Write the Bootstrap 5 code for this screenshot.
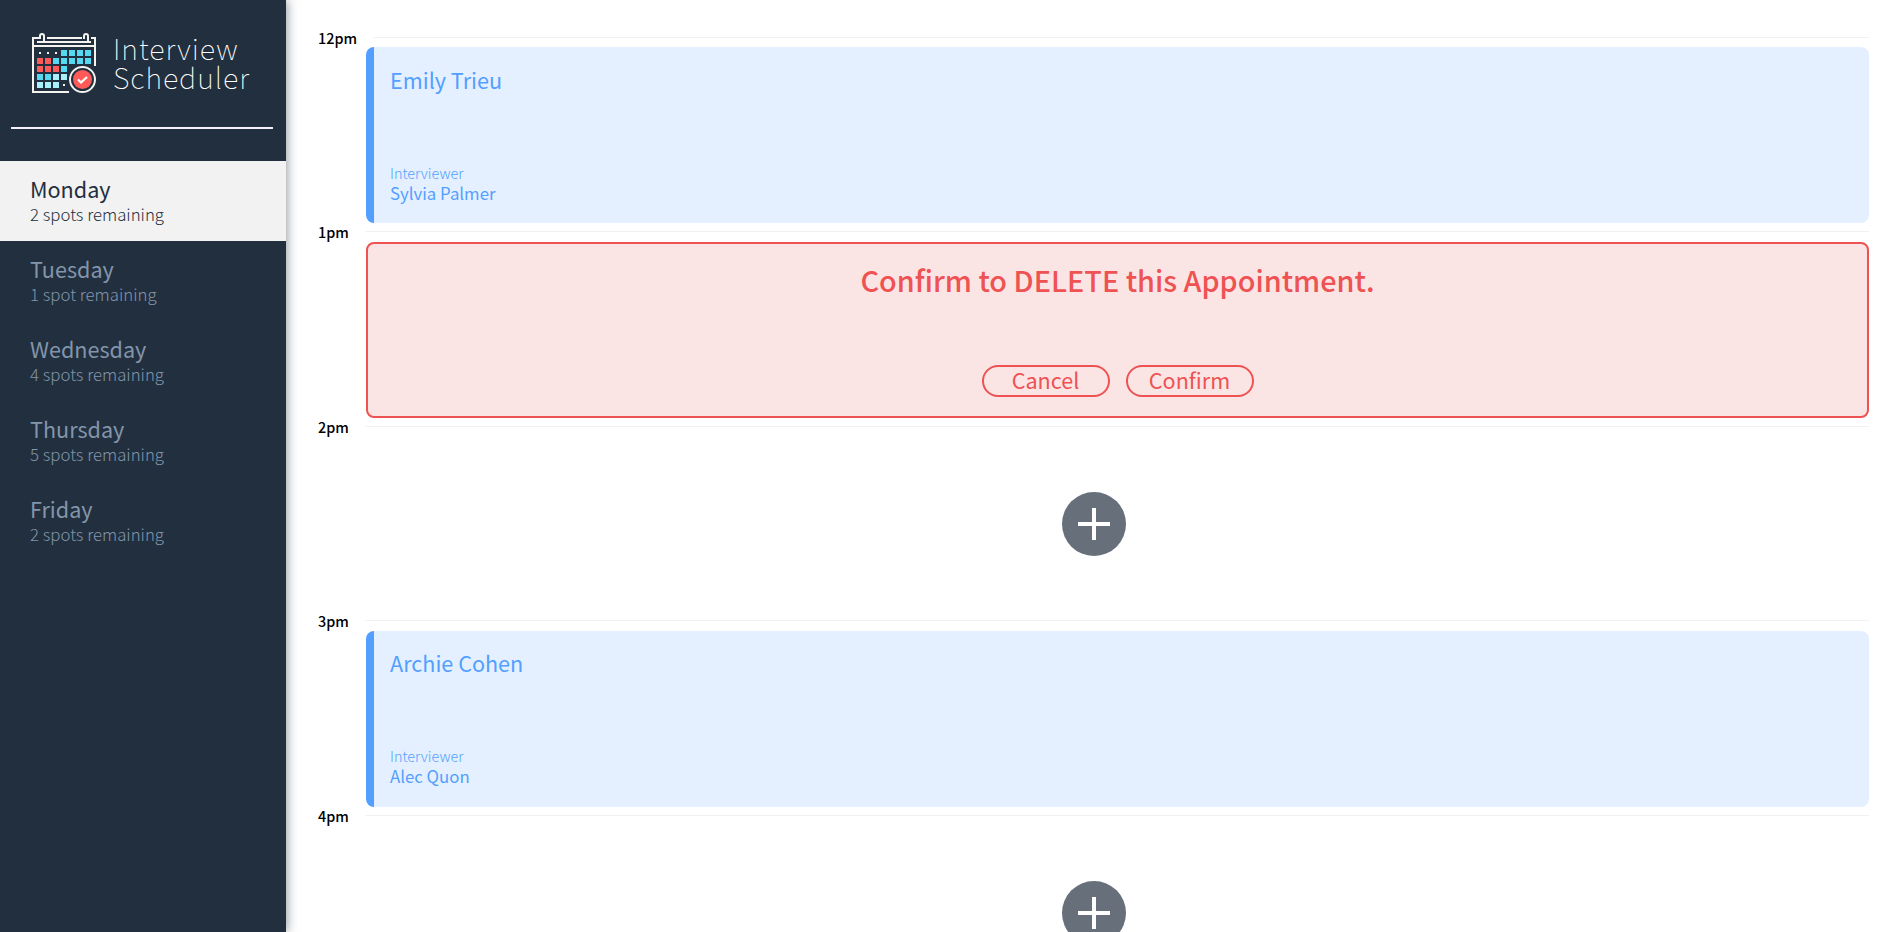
<!DOCTYPE html>
<html lang="en">
<head>
<meta charset="utf-8">
<meta name="viewport" content="width=device-width, initial-scale=1">
<title>Interview Scheduler</title>
<link href="https://cdn.jsdelivr.net/npm/bootstrap@5.3.0/dist/css/bootstrap.min.css" rel="stylesheet">
<style>
  body { font-family: "Noto Sans CJK SC", "Noto Sans", sans-serif; background: #fff; height: 932px; overflow: hidden; white-space: nowrap; }
  .sidebar { width: 286px; background: #222f3e; box-shadow: 1px 0 10px rgba(34,47,62,.5); z-index: 1; }
  .brand { height: 127px; padding: 33px 0 0 32px; }
  .brand-name { font-size: 28.8px; font-weight: 100; letter-spacing: .95px; line-height: 29px; color: #fff; margin: 0 0 0 17px; }
  .rule { height: 2px; margin: 0 13px 32px 11px; background: #f4f0f9; }
  .day { height: 80px; padding: 16px 0 0 30px; color: #8395ab; border: 0; border-radius: 0; background: transparent; }
  .day.active { background: #f2f2f2; color: #222f3e; }
  .day-name { font-size: 21.6px; line-height: 24px; font-weight: 400; }
  .day-spots { font-size: 16.8px; line-height: 24px; font-weight: 300; margin-top: 1px; }
  .schedule { padding: 28.6px 21px 0 32px; }
  .slot { height: 194.5px; }
  .hour { height: 18.5px; }
  .hour-label { font-size: 14.4px; line-height: 18px; font-weight: 500; color: #000; min-width: 31px; }
  .hour-line { height: 1px; background: #f2f2f2; margin: 8px 0 0 16px; }
  .appt { height: 176px; margin-left: 48px; border-radius: 8px; color: #539fff; background: #e4f0ff; border-left: 8px solid #539fff; padding: 20.5px 16px 20.5px; }
  .appt-name { font-size: 21.6px; line-height: 24px; }
  .appt-role { font-size: 14.4px; line-height: 20px; font-weight: 300; }
  .appt-person { font-size: 16.8px; line-height: 20px; }
  .confirm-box { height: 176px; margin-left: 48px; border-radius: 8px; border: 2px solid #ee5253; background: #fbe5e4; color: #ee5253; padding: 19px 0 19px; }
  .confirm-title { font-size: 28.8px; line-height: 34px; font-weight: 500; }
  .pill { width: 128px; height: 32px; border: 2px solid #ee5253; border-radius: 16px; color: #ee5253; font-size: 21.6px; line-height: 26px; padding: 0 0 2px; }
  .add { width: 64px; height: 64px; margin-top: 56px; }
</style>
</head>
<body>
<div class="d-flex h-100">
  <aside class="sidebar d-flex flex-column flex-shrink-0">
    <div class="brand d-flex align-items-start">
      <svg width="64" height="60" viewBox="32 33 64 60" fill="none">
        <g stroke="#f5f3ef" stroke-width="2">
          <path d="M40 38H33V92H69M47 38H82M91 38H95V66M37 42H91M33 46H95"/>
          <path d="M40 39V36a2 2 0 0 1 4 0V42M84 39V36a2 2 0 0 1 4 0V42"/>
        </g>
        <path fill="#f5f3ef" d="M39 52h2v2h-2zM47 52h2v2h-2zM55 52h2v2h-2zM63 84h2v2h-2z"/>
        <path fill="#54d9f0" d="M61 50h6v6h-6zM69 50h6v6h-6zM77 50h6v6h-6zM85 50h6v6h-6zM53 58h6v6h-6zM61 58h6v6h-6zM69 58h6v6h-6zM77 58h6v6h-6zM85 58h6v6h-6zM61 66h6v6h-6zM37 74h6v6h-6zM45 74h6v6h-6z"/>
        <path fill="#ff5a5a" d="M37 58h6v6h-6zM45 58h6v6h-6zM37 66h6v6h-6zM45 66h6v6h-6zM53 66h6v6h-6z"/>
        <path fill="#a8f0fa" d="M53 74h6v6h-6zM61 74h6v6h-6zM37 82h6v6h-6zM45 82h6v6h-6zM53 82h6v6h-6z"/>
        <circle cx="82.500" cy="79.500" r="12.500" fill="#222f3e" stroke="#f5f3ef" stroke-width="2"/>
        <circle cx="82.500" cy="79.500" r="9.500" fill="#ff5a5a"/>
        <path d="M78 79.500L81 82.500L87 77" stroke="#fff" stroke-width="2.200"/>
      </svg>
      <div class="brand-name"><div>Interview</div><div>Scheduler</div></div>
    </div>
    <div class="rule"></div>
    <nav class="d-flex flex-column">
      <a class="day active text-decoration-none"><div class="day-name">Monday</div><div class="day-spots">2 spots remaining</div></a>
      <a class="day text-decoration-none"><div class="day-name">Tuesday</div><div class="day-spots">1 spot remaining</div></a>
      <a class="day text-decoration-none"><div class="day-name">Wednesday</div><div class="day-spots">4 spots remaining</div></a>
      <a class="day text-decoration-none"><div class="day-name">Thursday</div><div class="day-spots">5 spots remaining</div></a>
      <a class="day text-decoration-none"><div class="day-name">Friday</div><div class="day-spots">2 spots remaining</div></a>
    </nav>
  </aside>
  <main class="schedule flex-grow-1 overflow-hidden">
    <section class="slot">
      <div class="hour d-flex"><div class="hour-label">12pm</div><div class="hour-line flex-grow-1"></div></div>
      <article class="appt d-flex flex-column justify-content-between">
        <div class="appt-name">Emily Trieu</div>
        <div><div class="appt-role">Interviewer</div><div class="appt-person">Sylvia Palmer</div></div>
      </article>
    </section>
    <section class="slot">
      <div class="hour d-flex"><div class="hour-label">1pm</div><div class="hour-line flex-grow-1"></div></div>
      <article class="confirm-box d-flex flex-column align-items-center justify-content-between">
        <div class="confirm-title">Confirm to DELETE this Appointment.</div>
        <div class="d-flex gap-3"><button class="pill btn">Cancel</button><button class="pill btn">Confirm</button></div>
      </article>
    </section>
    <section class="slot">
      <div class="hour d-flex"><div class="hour-label">2pm</div><div class="hour-line flex-grow-1"></div></div>
      <svg class="add d-block mx-auto" viewBox="0 0 64 64"><circle cx="32" cy="32" r="32" fill="#666f7a"/><path d="M16 32H48M32 16V48" stroke="#fff" stroke-width="4"/></svg>
    </section>
    <section class="slot">
      <div class="hour d-flex"><div class="hour-label">3pm</div><div class="hour-line flex-grow-1"></div></div>
      <article class="appt d-flex flex-column justify-content-between">
        <div class="appt-name">Archie Cohen</div>
        <div><div class="appt-role">Interviewer</div><div class="appt-person">Alec Quon</div></div>
      </article>
    </section>
    <section class="slot">
      <div class="hour d-flex"><div class="hour-label">4pm</div><div class="hour-line flex-grow-1"></div></div>
      <svg class="add d-block mx-auto" viewBox="0 0 64 64"><circle cx="32" cy="32" r="32" fill="#666f7a"/><path d="M16 32H48M32 16V48" stroke="#fff" stroke-width="4"/></svg>
    </section>
  </main>
</div>
<script src="https://cdn.jsdelivr.net/npm/bootstrap@5.3.0/dist/js/bootstrap.bundle.min.js"></script>
</body>
</html>
